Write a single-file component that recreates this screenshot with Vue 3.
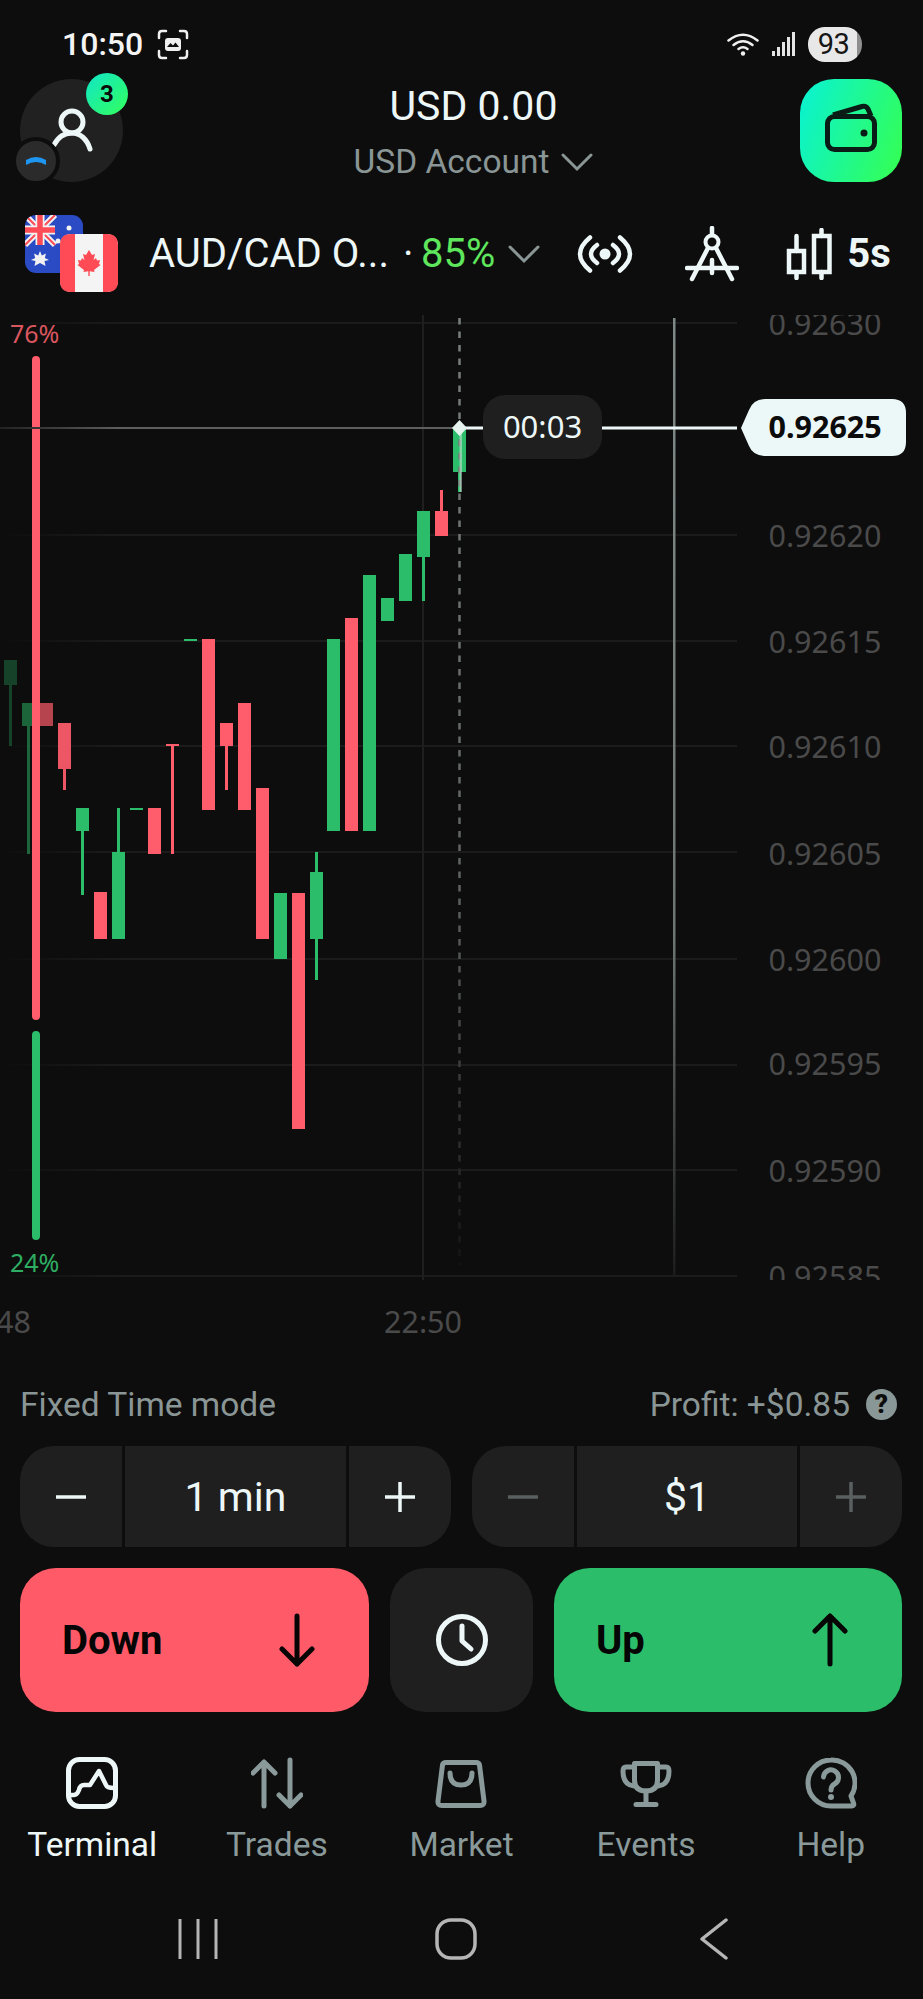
<template>
  <div class="screen">
    <!-- status bar -->
    <div class="status">
      <span class="clock">10:50</span>
      <svg class="shot" width="32" height="31" viewBox="0 0 32 31" fill="none" stroke="#f0f0f0" stroke-width="2.5" stroke-linecap="round">
        <path d="M2 9V5Q2 2 5 2H9M23 2H27Q30 2 30 5V9M30 22V26Q30 29 27 29H23M9 29H5Q2 29 2 26V22" />
        <rect x="8" y="9" width="16" height="13" rx="3" fill="#f0f0f0" stroke="none" />
        <path d="M10 18L13.5 14L16 16.5L18.500 13.500L22 18Z" fill="#0d0d0d" stroke="none" />
      </svg>
      <div class="status-right">
        <svg width="32" height="24" viewBox="0 0 32 24" fill="none" stroke="#f0f0f0" stroke-width="2.500" stroke-linecap="round">
          <path d="M1.500 8.500Q16 -3 30.500 8.500" />
          <path d="M6.500 13Q16 5.500 25.500 13" />
          <path d="M11.500 17Q16 13.500 20.500 17" />
          <circle cx="16" cy="21.500" r="2.200" fill="#f0f0f0" stroke="none" />
        </svg>
        <svg class="signal" width="24" height="24" viewBox="0 0 24 24" fill="#e4e4e4">
          <rect x="0" y="19" width="3" height="5" />
          <rect x="5" y="15" width="3" height="9" />
          <rect x="10" y="10" width="3" height="14" />
          <rect x="15" y="5" width="3" height="19" />
          <rect x="20" y="0" width="3" height="24" />
        </svg>
        <span class="battery">93</span>
      </div>
    </div>

    <!-- account header -->
    <div class="header">
      <div class="avatar">
        <svg width="103" height="103" viewBox="0 0 103 103" fill="none" stroke="#eef7f7" stroke-width="5" stroke-linecap="round">
          <circle cx="52" cy="43" r="11" />
          <path d="M34 66C38 58 45 54 52 54C60 54 67 60 70 70" />
        </svg>
        <span class="badge">3</span>
        <span class="mini">
          <svg width="40" height="40" viewBox="0 0 40 40">
            <path d="M10 19Q20 13 30 19L30 24Q20 18 10 24Z" fill="#1e96f0" />
          </svg>
        </span>
      </div>
      <div class="balance">
        <div class="amount">USD 0.00</div>
        <div class="account">
          <span>USD Account</span>
          <svg width="32" height="20" viewBox="0 0 32 20" fill="none" stroke="#8a9595" stroke-width="3" stroke-linecap="round"><path d="M2 3L16 17L30 3" /></svg>
        </div>
      </div>
      <div class="wallet">
        <svg width="102" height="103" viewBox="0 0 102 103" fill="none" stroke="#0a1c16" stroke-width="5" stroke-linejoin="round">
          <rect x="27.500" y="37.500" width="47" height="33" rx="7" />
          <path d="M33 36L62 27.500Q66 26.500 68 30L71 37" />
          <circle cx="64" cy="54" r="3.500" fill="#0a1c16" stroke="none" />
        </svg>
      </div>
    </div>

    <!-- asset row -->
    <div class="asset">
      <svg class="flags" width="93" height="77" viewBox="0 0 93 77">
        <defs>
          <clipPath id="auClip"><rect width="58" height="58" rx="11" /></clipPath>
        </defs>
        <g clip-path="url(#auClip)">
          <rect width="58" height="58" fill="#2a4bc4" />
          <path d="M0 0L30 30M30 0L0 30" stroke="#f2f2f2" stroke-width="6" />
          <path d="M0 0L30 30M30 0L0 30" stroke="#ff4b55" stroke-width="2" />
          <path d="M15 0V30M0 15H30" stroke="#f2f2f2" stroke-width="9" />
          <path d="M15 0V30M0 15H30" stroke="#ff4b55" stroke-width="5.500" />
          <path d="M15 36L16.800 40.500L21 38.500L19.800 43L24 45L19.500 46L20.500 51L15 48L9.500 51L10.500 46L6 45L10.200 43L9 38.500L13.200 40.500Z" fill="#f2f2f2" />
          <circle cx="44" cy="13" r="2.500" fill="#f2f2f2" />
          <circle cx="33" cy="26" r="2.500" fill="#f2f2f2" />
          <circle cx="53" cy="22" r="2" fill="#f2f2f2" />
        </g>
        <rect x="35" y="19" width="58" height="58" rx="11" fill="#f4f4f4" />
        <path d="M46 19H50V77H46Q35 77 35 66V30Q35 19 46 19Z" fill="#ff4b55" />
        <path d="M78 19H82Q93 19 93 30V66Q93 77 82 77H78Z" fill="#ff4b55" />
        <polygon transform="translate(64 47)" fill="#ff4b55" points="0,-12 -3,-7 -6,-8 -4.500,-2 -7,-4 -8,-1.500 -11,-2 -10,2 -11.500,3 -5,8 -5.500,10 -0.700,9.300 -0.700,14 0.700,14 0.700,9.300 5.500,10 5,8 11.500,3 10,2 11,-2 8,-1.500 7,-4 4.500,-2 6,-8 3,-7" />
      </svg>
      <span class="pair">AUD/CAD O...</span>
      <span class="sep">·</span>
      <span class="payout">85%</span>
      <svg class="asset-chevron" width="32" height="20" viewBox="0 0 32 20" fill="none" stroke="#8a9595" stroke-width="3" stroke-linecap="round"><path d="M2 3L16 17L30 3" /></svg>
      <svg class="live" width="56" height="40" viewBox="-28 -20 56 40" fill="none" stroke="#eef7f7" stroke-width="4.500" stroke-linecap="round">
        <circle cx="0" cy="0" r="5.500" fill="#eef7f7" stroke="none" />
        <path d="M-8 -9Q-20 0 -8 9M8 -9Q20 0 8 9" />
        <path d="M-15 -16.500Q-35 0 -15 16.500M15 -16.500Q35 0 15 16.500" />
      </svg>
      <svg class="compass" width="54" height="56" viewBox="0 0 54 56" fill="none" stroke="#eef7f7" stroke-width="4.500" stroke-linecap="round">
        <path d="M27 2V8" />
        <circle cx="27" cy="16" r="6.500" stroke-width="4" />
        <path d="M23 22L7 53M31 22L47 53" />
        <path d="M2 42H52" />
        <path d="M27 34V47" />
      </svg>
      <svg class="candles" width="48" height="52" viewBox="0 0 48 52" fill="none" stroke="#eef7f7" stroke-width="4.500" stroke-linecap="round">
        <rect x="3" y="23" width="15" height="21" />
        <path d="M10.500 8V23M10.500 44V50" />
        <rect x="28" y="8" width="15.500" height="36" />
        <path d="M35.500 2V8M35.500 44V50" />
      </svg>
      <span class="period">5s</span>
    </div>

    <!-- chart -->
    <div class="chart">
      <svg width="923" height="1035" viewBox="0 310 923 1035">
        <defs>
          <clipPath id="plotClip"><rect x="0" y="315" width="923" height="965" /></clipPath>
          <linearGradient id="fadeLine" gradientUnits="userSpaceOnUse" x1="0" y1="318" x2="0" y2="1275">
            <stop offset="0" stop-color="#7f8a88" />
            <stop offset="0.65" stop-color="#6c7573" />
            <stop offset="1" stop-color="#1c1c1c" />
          </linearGradient>
          <linearGradient id="fadeDash" gradientUnits="userSpaceOnUse" x1="0" y1="318" x2="0" y2="1265">
            <stop offset="0" stop-color="#7a7f7e" />
            <stop offset="0.6" stop-color="#5e6261" />
            <stop offset="1" stop-color="#141414" />
          </linearGradient>
          <linearGradient id="fadeGrid" gradientUnits="userSpaceOnUse" x1="0" y1="0" x2="120" y2="0">
            <stop offset="0" stop-color="#0d0d0d" />
            <stop offset="1" stop-color="#1b1b1b" />
          </linearGradient>
          <linearGradient id="fadePrice" gradientUnits="userSpaceOnUse" x1="0" y1="0" x2="120" y2="0">
            <stop offset="0" stop-color="#222" />
            <stop offset="1" stop-color="#5e5e5e" />
          </linearGradient>
        </defs>

        <g clip-path="url(#plotClip)">
          <rect v-for="g in gridLines" :key="g" x="0" :y="g - 1" width="737" height="2" fill="url(#fadeGrid)" />
          <text v-for="l in axisLabels" :key="l.text" class="axis" x="768.500" :y="l.y + 11.500">{{ l.text }}</text>
        </g>
        <rect x="422" y="315" width="2" height="965" fill="#1f1f1f" />
        <rect x="673" y="318" width="2.500" height="957" fill="url(#fadeLine)" />

        <g v-for="c in candles" :key="c.x" :opacity="c.o || 1">
          <rect v-if="c.wt" :x="c.x + 5" :y="c.wt" width="3" :height="c.wb - c.wt" :fill="c.g ? green : red" />
          <rect :x="c.x" :y="c.t" width="13" :height="c.b - c.t" :fill="c.g ? green : red" />
        </g>

        <rect x="32" y="356" width="8" height="664" rx="4" :fill="red" />
        <rect x="32" y="1031" width="8" height="209" rx="4" :fill="green" />
        <text class="pct" x="10" y="343" fill="#d9565f">76%</text>
        <text class="pct" x="10" y="1272" fill="#2eae62">24%</text>

        <rect x="0" y="427" width="459" height="2" fill="url(#fadePrice)" />
        <line x1="459.500" y1="318" x2="459.500" y2="1265" stroke="url(#fadeDash)" stroke-width="2.500" stroke-dasharray="6.500 7" />
        <rect x="459.500" y="428" width="2.500" height="64" fill="#cfe9dc" opacity="0.55" />
        <rect x="459" y="426.500" width="24" height="3" fill="#eef7f7" />
        <rect x="602" y="426.500" width="135" height="3" fill="#eef7f7" />
        <polygon points="459.500,420 467,428 459.500,436 452,428" fill="#e6f2ee" />
        <path d="M741 428L749 410Q753 399 766 399H892Q906 399 906 413V442Q906 456 892 456H766Q753 456 749 446Z" fill="#ecf8f8" />
        <text class="price" x="768.500" y="437.500">0.92625</text>

        <text class="axis" x="31" y="1333" text-anchor="end">48</text>
        <text class="axis" x="423" y="1333" text-anchor="middle">22:50</text>
      </svg>
      <div class="timer">00:03</div>
    </div>

    <!-- trade panel -->
    <div class="mode">
      <span>Fixed Time mode</span>
      <div class="profit">
        <span>Profit: +$0.85</span>
        <span class="hint">?</span>
      </div>
    </div>

    <div class="steppers">
      <div class="stepper">
        <div class="step">
          <svg width="32" height="32" viewBox="0 0 32 32" stroke="#eef7f7" stroke-width="3.500"><path d="M1 16H31" /></svg>
        </div>
        <div class="step value">1 min</div>
        <div class="step">
          <svg width="32" height="32" viewBox="0 0 32 32" stroke="#eef7f7" stroke-width="3.500"><path d="M1 16H31M16 1V31" /></svg>
        </div>
      </div>
      <div class="stepper">
        <div class="step">
          <svg width="32" height="32" viewBox="0 0 32 32" stroke="#5a5f5f" stroke-width="3.500"><path d="M1 16H31" /></svg>
        </div>
        <div class="step value">$1</div>
        <div class="step">
          <svg width="32" height="32" viewBox="0 0 32 32" stroke="#5a5f5f" stroke-width="3.500"><path d="M1 16H31M16 1V31" /></svg>
        </div>
      </div>
    </div>

    <div class="actions">
      <button class="trade down">
        <span>Down</span>
        <svg width="36" height="54" viewBox="0 0 36 54" fill="none" stroke="#050505" stroke-width="5" stroke-linecap="round" stroke-linejoin="round"><path d="M18 3V51M3 36L18 51L33 36" /></svg>
      </button>
      <button class="history">
        <svg width="54" height="54" viewBox="0 0 54 54" fill="none" stroke="#eef7f7" stroke-width="5" stroke-linecap="round" stroke-linejoin="round">
          <circle cx="27" cy="27" r="23.500" />
          <path d="M27 13V28L36 36" />
        </svg>
      </button>
      <button class="trade up">
        <span>Up</span>
        <svg width="36" height="54" viewBox="0 0 36 54" fill="none" stroke="#050505" stroke-width="5" stroke-linecap="round" stroke-linejoin="round"><path d="M18 51V3M3 18L18 3L33 18" /></svg>
      </button>
    </div>

    <!-- tab bar -->
    <div class="tabs">
      <div class="tab active">
        <svg width="52" height="52" viewBox="0 0 52 52" fill="none" stroke="currentColor" stroke-width="5" stroke-linecap="round" stroke-linejoin="round">
          <rect x="2.500" y="2.500" width="47" height="47" rx="11" />
          <path d="M5 38H8Q11 38 13 33Q14 28 18 28H24L33 14L40 28Q41 31 48 31" stroke-width="4.500" />
        </svg>
        <span>Terminal</span>
      </div>
      <div class="tab">
        <svg width="52" height="52" viewBox="0 0 52 52" fill="none" stroke="currentColor" stroke-width="5" stroke-linecap="round" stroke-linejoin="round">
          <path d="M13 5V49M2 16L13 5L24 16" />
          <path d="M39 3V49M28 38L39 49L50 38" />
        </svg>
        <span>Trades</span>
      </div>
      <div class="tab">
        <svg width="52" height="52" viewBox="0 0 52 52" fill="none" stroke="currentColor" stroke-width="5" stroke-linecap="round" stroke-linejoin="round">
          <path d="M11 5.500H41Q44 5.500 44.500 8L49 44Q49.500 48.500 45 48.500H7Q2.500 48.500 3 44L7.500 8Q8 5.500 11 5.500Z" />
          <path d="M15 16Q15 28 26 28Q37 28 37 16" />
        </svg>
        <span>Market</span>
      </div>
      <div class="tab">
        <svg width="52" height="52" viewBox="0 0 52 52" fill="none" stroke="currentColor" stroke-width="5" stroke-linecap="round" stroke-linejoin="round">
          <path d="M14.500 6.500H37.500V23Q37.500 34 26 34Q14.500 34 14.500 23Z" />
          <path d="M14 10H6Q3 10 3 14Q3 28 14 29M38 10H46Q49 10 49 14Q49 28 38 29" />
          <path d="M26 34V46M16 47.500H36" />
        </svg>
        <span>Events</span>
      </div>
      <div class="tab">
        <svg width="52" height="52" viewBox="0 0 52 52" fill="none" stroke="currentColor" stroke-width="5" stroke-linecap="round" stroke-linejoin="round">
          <path d="M26 3A23 23 0 0 0 26 49H47Q49.500 49 48.500 46L46 39A23 23 0 0 0 26 3Z" />
          <path d="M18.500 20A7.500 7.500 0 1 1 29.500 27Q26 29 26 33" />
          <circle cx="26" cy="40" r="3" fill="currentColor" stroke="none" />
        </svg>
        <span>Help</span>
      </div>
    </div>

    <!-- android nav -->
    <div class="sysnav">
      <div class="sys-item">
        <svg width="40" height="40" viewBox="0 0 40 40" stroke="#b5b5b5" stroke-width="3"><path d="M2 0V40M20 0V40M38 0V40" /></svg>
      </div>
      <div class="sys-item">
        <svg width="42" height="42" viewBox="0 0 42 42" fill="none" stroke="#b5b5b5" stroke-width="3.500"><rect x="2" y="2" width="38" height="38" rx="14" /></svg>
      </div>
      <div class="sys-item">
        <svg width="28" height="42" viewBox="0 0 28 42" fill="none" stroke="#b5b5b5" stroke-width="3.500" stroke-linecap="round" stroke-linejoin="round"><path d="M26 2L2 21L26 40" /></svg>
      </div>
    </div>
  </div>
</template>

<script setup>
const red = '#ff5c6c'
const green = '#2bbd6a'

const gridLines = [323, 535, 641, 746, 852, 959, 1065, 1170, 1276]

const axisLabels = [
  { text: '0.92630', y: 323 },
  { text: '0.92620', y: 535 },
  { text: '0.92615', y: 641 },
  { text: '0.92610', y: 746 },
  { text: '0.92605', y: 853 },
  { text: '0.92600', y: 959 },
  { text: '0.92595', y: 1063 },
  { text: '0.92590', y: 1170 },
  { text: '0.92585', y: 1276 },
]

// t/b = body, wt/wb = wick, g = green, o = fade on the left edge
const candles = [
  { x: 4, t: 660, b: 685, wt: 685, wb: 746, g: true, o: 0.3 },
  { x: 22, t: 703, b: 726, wt: 726, wb: 854, g: true, o: 0.5 },
  { x: 40, t: 703, b: 726, o: 0.7 },
  { x: 58, t: 723, b: 769, wt: 769, wb: 790, o: 0.92 },
  { x: 76, t: 808, b: 831, wt: 831, wb: 895, g: true },
  { x: 94, t: 892, b: 939 },
  { x: 112, t: 852, b: 939, wt: 808, wb: 852, g: true },
  { x: 130, t: 808, b: 810, g: true },
  { x: 148, t: 808, b: 854 },
  { x: 166, t: 744, b: 746, wt: 746, wb: 854 },
  { x: 184, t: 639, b: 641, g: true },
  { x: 202, t: 639, b: 810 },
  { x: 220, t: 723, b: 746, wt: 746, wb: 790 },
  { x: 238, t: 703, b: 810 },
  { x: 256, t: 788, b: 939 },
  { x: 274, t: 893, b: 959, g: true },
  { x: 292, t: 893, b: 1129 },
  { x: 310, t: 872, b: 939, wt: 852, wb: 980, g: true },
  { x: 327, t: 639, b: 831, g: true },
  { x: 345, t: 618, b: 831 },
  { x: 363, t: 575, b: 831, g: true },
  { x: 381, t: 598, b: 621, g: true },
  { x: 399, t: 554, b: 601, g: true },
  { x: 417, t: 511, b: 557, wt: 557, wb: 601, g: true },
  { x: 435, t: 511, b: 536, wt: 490, wb: 511 },
  { x: 453, t: 428, b: 472, wt: 472, wb: 492, g: true },
]
</script>

<style>
html,
body {
  margin: 0;
  background: #0d0d0d;
}
</style>

<style scoped>
.screen {
  width: 923px;
  height: 1999px;
  overflow: hidden;
  background: #0d0d0d;
  color: #eef7f7;
  font-family: Roboto, "Liberation Sans", sans-serif;
}

svg {
  display: block;
  flex-shrink: 0;
}

.status {
  box-sizing: border-box;
  height: 79px;
  padding: 9px 61px 0 62px;
  display: flex;
  align-items: center;
}

.clock {
  font-size: 32px;
  font-weight: 500;
  color: #f4f4f4;
}

.shot {
  margin-left: 14px;
}

.status-right {
  margin-left: auto;
  display: flex;
  align-items: center;
}

.signal {
  margin-left: 13px;
}

.battery {
  box-sizing: border-box;
  width: 54px;
  height: 35px;
  margin-left: 12px;
  border-radius: 17px;
  background: linear-gradient(to right, #e8e8e8 91%, #8f8f8f 91%);
  color: #161616;
  font-size: 29px;
  letter-spacing: -0.5px;
  line-height: 35px;
  text-align: center;
  padding-right: 3px;
}

.header {
  height: 103px;
  padding: 0 21px 0 20px;
  display: flex;
  justify-content: space-between;
}

.avatar {
  position: relative;
  width: 103px;
  height: 103px;
  border-radius: 50%;
  background: #212121;
}

.badge {
  position: absolute;
  left: 66px;
  top: -6px;
  width: 42px;
  height: 42px;
  border-radius: 50%;
  background: linear-gradient(135deg, #10e6c8, #33ff5c);
  color: #0a0a0a;
  font-size: 24px;
  font-weight: 700;
  line-height: 42px;
  text-align: center;
}

.mini {
  position: absolute;
  left: -8px;
  top: 58px;
  box-sizing: border-box;
  width: 48px;
  height: 48px;
  border: 4px solid #0d0d0d;
  border-radius: 50%;
  background: #2b2b2b;
}

.balance {
  padding: 2px 0 0 24px;
  display: flex;
  flex-direction: column;
  align-items: center;
}

.amount {
  font-size: 41px;
  line-height: 50px;
}

.account {
  margin-top: 11px;
  display: flex;
  align-items: center;
  gap: 12px;
  font-size: 33.5px;
  line-height: 40px;
  color: #8a9595;
}

.wallet {
  width: 102px;
  height: 103px;
  border-radius: 34px;
  background: linear-gradient(110deg, #08f2d6, #36ff4e);
}

.asset {
  height: 77px;
  margin-top: 33px;
  padding-left: 25px;
  display: flex;
  align-items: center;
}

.pair {
  margin-left: 31px;
  width: 244px;
  font-size: 40px;
  white-space: nowrap;
}

.sep {
  margin-left: 10px;
  width: 18px;
  font-size: 40px;
}

.payout {
  font-size: 40px;
  color: #5ee65c;
}

.asset-chevron {
  margin-left: 13px;
}

.live {
  margin-left: 37px;
}

.compass {
  margin-left: 52px;
}

.candles {
  margin-left: 47px;
}

.period {
  margin-left: 13px;
  font-size: 40px;
  font-weight: 700;
}

.chart {
  position: relative;
  width: 923px;
  height: 1035px;
  margin-top: 18px;
}

.axis {
  font-family: "Noto Sans", sans-serif;
  font-size: 30.5px;
  fill: #4a4a4a;
}

.price {
  font-family: "Noto Sans", sans-serif;
  font-size: 30.5px;
  font-weight: 700;
  fill: #0b0b0b;
}

.pct {
  font-family: "Noto Sans", sans-serif;
  font-size: 25px;
}

.timer {
  position: absolute;
  left: 483px;
  top: 85px;
  width: 119px;
  height: 64px;
  border-radius: 22px;
  background: #1f1f1f;
  font-family: "Noto Sans", sans-serif;
  font-size: 31px;
  line-height: 62px;
  text-align: center;
}

.mode {
  height: 40px;
  margin-top: 39px;
  padding: 0 26px 0 20px;
  display: flex;
  align-items: center;
  justify-content: space-between;
  font-size: 33.5px;
  color: #8a9595;
}

.profit {
  display: flex;
  align-items: center;
  gap: 16px;
}

.hint {
  width: 31px;
  height: 31px;
  border-radius: 50%;
  background: #8a9797;
  color: #0d0d0d;
  font-size: 26px;
  font-weight: 900;
  line-height: 31px;
  text-align: center;
}

.steppers {
  margin-top: 22px;
  padding-left: 20px;
  display: grid;
  grid-template-columns: 431px 430px;
  gap: 21px;
}

.stepper {
  height: 101px;
  border-radius: 34px;
  overflow: hidden;
  display: grid;
  grid-template-columns: 102px 1fr 102px;
  gap: 3px;
}

.step {
  background: #1f1f1f;
  display: flex;
  align-items: center;
  justify-content: center;
}

.value {
  font-size: 41px;
}

.actions {
  margin-top: 21px;
  padding-left: 20px;
  display: grid;
  grid-template-columns: 349px 143px 348px;
  gap: 21px;
}

.actions button {
  height: 144px;
  border: none;
  border-radius: 36px;
  font-family: inherit;
}

.trade {
  padding: 0 54px 0 42px;
  display: flex;
  align-items: center;
  justify-content: space-between;
  color: #050505;
  font-size: 40px;
  font-weight: 700;
}

.down {
  background: #ff5a68;
}

.up {
  background: #2bbd6a;
}

.history {
  background: #1f1f1f;
  display: flex;
  align-items: center;
  justify-content: center;
}

.tabs {
  margin-top: 45px;
  display: grid;
  grid-template-columns: repeat(5, 1fr);
}

.tab {
  display: flex;
  flex-direction: column;
  align-items: center;
  color: #8a9a9a;
  font-size: 33.5px;
}

.tab span {
  margin-top: 16px;
  line-height: 40px;
}

.tab.active {
  color: #eef7f7;
}

.sysnav {
  margin-top: 53px;
  padding-left: 69px;
  display: grid;
  grid-template-columns: repeat(3, 258px);
}

.sys-item {
  height: 42px;
  display: flex;
  align-items: center;
  justify-content: center;
}
</style>
